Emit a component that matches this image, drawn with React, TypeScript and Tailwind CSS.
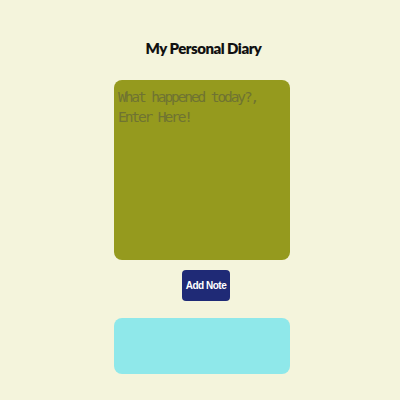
export default function App() {
  return (
    <div className="min-h-screen w-full bg-[#f4f4dc] flex flex-col items-center pt-[38px] pl-[4px]">
      <h1 className="text-[15px] leading-[20px] font-extrabold tracking-[-0.5px] text-[#111] font-['Lato',sans-serif] ml-[3px]">
        My Personal Diary
      </h1>
      <textarea
        placeholder="What happened today?, Enter Here!"
        className="mt-[22px] w-[176px] h-[180px] resize-none rounded-[8px] bg-[#959a1e] pl-[4px] pr-[2px] pt-[7px] text-[14.5px] leading-[20px] tracking-[-2.1px] font-['DejaVu_Sans_Mono',monospace] text-[#333] placeholder:text-[#6f7332] outline-none"
      />
      <button className="mt-[10px] ml-[8px] w-[48px] h-[31px] rounded-[4px] bg-[#1f2a76] text-white text-[10px] tracking-[-0.5px] font-bold font-['Liberation_Sans',sans-serif]">
        Add Note
      </button>
      <div className="mt-[17px] w-[176px] h-[56px] rounded-[8px] bg-[#8fe8ea]" />
    </div>
  );
}
